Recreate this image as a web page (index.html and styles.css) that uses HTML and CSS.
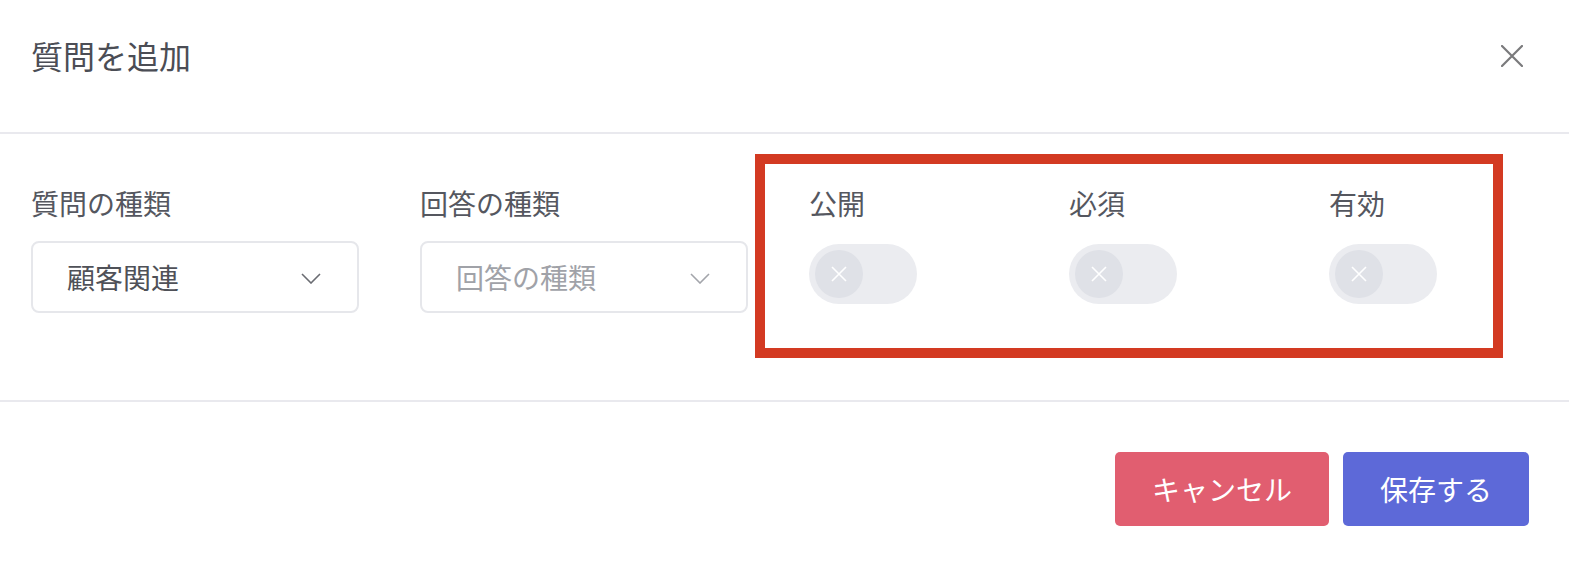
FILE: index.html
```html
<!DOCTYPE html>
<html lang="ja">
<head>
<meta charset="utf-8">
<title>質問を追加</title>
<link rel="stylesheet" href="styles.css">
</head>
<body>
<div class="modal">
  <header class="modal-header">
    <h1 class="modal-title">質問を追加</h1>
    <button class="close-btn" aria-label="閉じる">
      <svg width="22" height="22" viewBox="0 0 22 22"><path d="M1 1 L21 21 M21 1 L1 21" stroke="#7a7a7c" stroke-width="2.2" stroke-linecap="round" fill="none"/></svg>
    </button>
  </header>
  <section class="modal-body">
    <div class="field">
      <div class="label">質問の種類</div>
      <div class="select">
        <span class="select-value">顧客関連</span>
        <svg class="chev" width="20" height="11" viewBox="0 0 20 11"><path d="M1 1 L10 10 L19 1" stroke="#6a6c72" stroke-width="1.6" fill="none"/></svg>
      </div>
    </div>
    <div class="field">
      <div class="label">回答の種類</div>
      <div class="select">
        <span class="select-value placeholder">回答の種類</span>
        <svg class="chev" width="20" height="11" viewBox="0 0 20 11"><path d="M1 1 L10 10 L19 1" stroke="#a3a5ab" stroke-width="1.6" fill="none"/></svg>
      </div>
    </div>
    <div class="toggles">
      <div class="toggle-item">
        <div class="label">公開</div>
        <div class="switch"><span class="knob"><svg width="16" height="16" viewBox="0 0 16 16"><path d="M1 1 L15 15 M15 1 L1 15" stroke="#fff" stroke-width="1.6" fill="none"/></svg></span></div>
      </div>
      <div class="toggle-item">
        <div class="label">必須</div>
        <div class="switch"><span class="knob"><svg width="16" height="16" viewBox="0 0 16 16"><path d="M1 1 L15 15 M15 1 L1 15" stroke="#fff" stroke-width="1.6" fill="none"/></svg></span></div>
      </div>
      <div class="toggle-item">
        <div class="label">有効</div>
        <div class="switch"><span class="knob"><svg width="16" height="16" viewBox="0 0 16 16"><path d="M1 1 L15 15 M15 1 L1 15" stroke="#fff" stroke-width="1.6" fill="none"/></svg></span></div>
      </div>
      <div class="highlight"></div>
    </div>
  </section>
  <footer class="modal-footer">
    <button class="btn btn-cancel">キャンセル</button>
    <button class="btn btn-save">保存する</button>
  </footer>
</div>
</body>
</html>
```

FILE: styles.css
```css
html, body {
  margin: 0;
  padding: 0;
  background: #ffffff;
}
body {
  font-family: "Noto Sans CJK JP", "Noto Sans", sans-serif;
  color: #55575f;
  overflow: hidden;
}
.modal {
  width: 1569px;
  height: 574px;
  display: flex;
  flex-direction: column;
}
.modal-header {
  height: 134px;
  flex-shrink: 0;
  box-sizing: border-box;
  padding: 35px 46px 0 31px;
  display: flex;
  justify-content: space-between;
  align-items: flex-start;
  border-bottom: 2px solid #e9e9ee;
}
.modal-title {
  margin: 0;
  font-size: 32px;
  font-weight: 400;
  line-height: 40px;
  color: #4b4d55;
}
.close-btn {
  border: 0;
  background: none;
  padding: 0;
  margin-top: 10px;
  width: 22px;
  height: 22px;
  display: block;
}
.close-btn svg { display: block; }
.modal-body {
  height: 268px;
  flex-shrink: 0;
  box-sizing: border-box;
  padding: 49px 0 0 31px;
  display: flex;
  gap: 61px;
  border-bottom: 2px solid #e9e9ee;
}
.field {
  width: 328px;
  flex-shrink: 0;
  display: flex;
  flex-direction: column;
}
.label {
  font-size: 28px;
  line-height: 40px;
  color: #55575f;
}
.select {
  margin-top: 18px;
  height: 72px;
  box-sizing: border-box;
  border: 2px solid #e6e7eb;
  border-radius: 8px;
  display: flex;
  align-items: center;
  justify-content: space-between;
  padding: 0 36px 0 34px;
}
.select-value {
  font-size: 28px;
  line-height: 40px;
  color: #4f5158;
}
.select-value.placeholder { color: #a0a2a8; }
.chev { display: block; margin-top: 2px; }
.toggles {
  position: relative;
  display: flex;
  flex: 1;
  min-width: 0;
}
.toggle-item {
  width: 260px;
  flex-shrink: 0;
  display: flex;
  flex-direction: column;
}
.switch {
  margin-top: 21px;
  width: 108px;
  height: 60px;
  border-radius: 30px;
  background: #ebecf0;
  box-sizing: border-box;
  padding: 6px;
}
.knob {
  width: 48px;
  height: 48px;
  border-radius: 50%;
  background: #dfe1e7;
  display: flex;
  align-items: center;
  justify-content: center;
}
.knob svg { display: block; }
.highlight {
  position: absolute;
  left: -54px;
  top: -29px;
  width: 748px;
  height: 204px;
  box-sizing: border-box;
  border: 10px solid #d33a22;
  pointer-events: none;
}
.modal-footer {
  flex: 1;
  display: flex;
  justify-content: flex-end;
  align-items: flex-start;
  gap: 14px;
  padding: 50px 40px 0 0;
}
.btn {
  height: 74px;
  border: 0;
  border-radius: 5px;
  padding: 0 37px;
  font-family: "Noto Sans CJK JP", "Noto Sans", sans-serif;
  font-size: 28px;
  color: #ffffff;
  line-height: 40px;
}
.btn-cancel { background: #e15e70; }
.btn-save { background: #5d69d8; }
```
